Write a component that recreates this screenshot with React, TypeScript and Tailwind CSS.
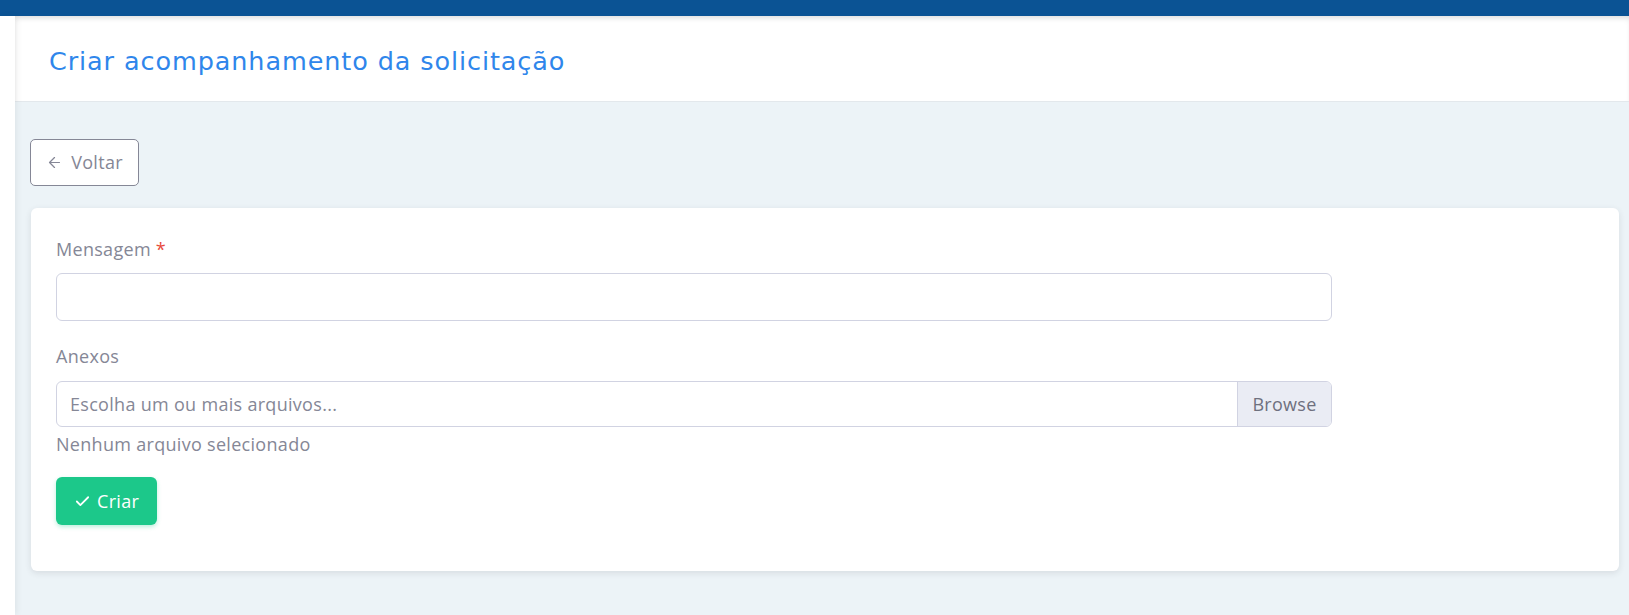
import { ArrowLeft, Check } from "lucide-react";

const body = { fontFamily: "'Open Sans', 'Noto Sans', sans-serif" };

export default function App() {
  return (
    <div className="flex flex-col h-[615px] bg-[#ecf3f7] overflow-hidden tracking-[0.3px]" style={body}>
      {/* barra superior */}
      <div className="h-[16px] bg-[#0b5394] shrink-0" />
      <div className="flex flex-1 min-h-0">
        <div className="w-[15px] bg-white shrink-0 shadow-[2px_0_6px_rgba(0,0,0,0.06)] z-10" />
        <div className="flex-1 flex flex-col min-w-0">
          {/* cabeçalho */}
          <div className="h-[86px] bg-white flex items-center pl-[34px] shadow-[inset_0_4px_6px_-3px_rgba(0,0,0,0.18)] border-b border-[#e3e8ec]">
            <h1
              className="text-[25.5px] text-[#2f86eb] tracking-[0.9px] pt-[6px]"
              style={{ fontFamily: "'DejaVu Sans', 'Noto Sans', sans-serif" }}
            >
              Criar acompanhamento da solicitação
            </h1>
          </div>

          {/* conteúdo */}
          <div className="pt-[37px] pl-[15px] pr-[10px]">
            <button className="flex items-center gap-[8px] h-[47px] w-[109px] justify-center border border-[#858796] rounded-[5px] bg-white text-[#858796] text-[18px]">
              <ArrowLeft size={17} strokeWidth={1.75} />
              Voltar
            </button>

            <div className="mt-[22px] ml-[1px] bg-white rounded-[6px] shadow-[0_2px_6px_rgba(58,59,69,0.12)] px-[25px] pt-[29px] pb-[46px]">
              <div className="w-[1276px]">
                <label className="block text-[18px] text-[#858796] leading-[24px]">
                  Mensagem <span className="text-[#e74a3b]">*</span>
                </label>
                <input className="mt-[12px] block w-full h-[48px] border border-[#d1d3e2] rounded-[6px] bg-white outline-none" />

                <label className="block mt-[23px] text-[18px] text-[#858796] leading-[24px]">
                  Anexos
                </label>
                <div className="mt-[13px] flex h-[46px] border border-[#d1d3e2] rounded-[6px] overflow-hidden">
                  <div className="flex-1 flex items-center px-[13px] text-[18px] text-[#858796]">
                    Escolha um ou mais arquivos...
                  </div>
                  <div className="w-[94px] flex items-center justify-center bg-[#eaecf4] border-l border-[#d1d3e2] text-[18px] text-[#6e707e]">
                    Browse
                  </div>
                </div>
                <div className="mt-[4px] text-[18px] text-[#858796] leading-[26px]">
                  Nenhum arquivo selecionado
                </div>

                <button className="mt-[20px] flex items-center gap-[6px] h-[48px] px-[18px] rounded-[6px] bg-[#1cc88a] text-white text-[18px] shadow-[0_2px_4px_rgba(28,200,138,0.3)]">
                  <Check size={17} strokeWidth={2.5} />
                  Criar
                </button>
              </div>
            </div>
          </div>
        </div>
      </div>
    </div>
  );
}
